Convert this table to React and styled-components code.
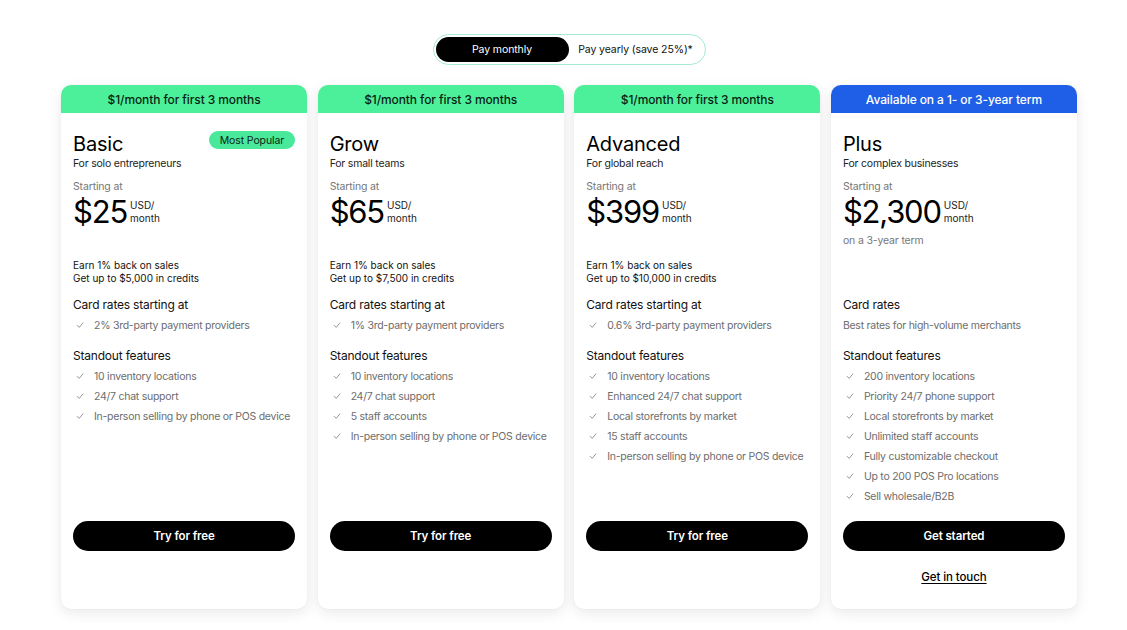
import React, { useState } from 'react'
import styled, { createGlobalStyle } from 'styled-components'

const GlobalStyle = createGlobalStyle`
  body {
    margin: 0;
    background: #ffffff;
    font-family: Inter, "Noto Sans", "Liberation Sans", sans-serif;
    color: #000;
  }
`;

const Page = styled.div`
  padding: 34px 50px 20px 61px;
  display: flex;
  flex-direction: column;
  align-items: center;
  gap: 20px;
`;

const Toggle = styled.div`
  display: grid;
  grid-template-columns: 133px 134px;
  padding: 2px;
  border: 1.5px solid #a4ecd0;
  border-radius: 999px;
`;

const ToggleOption = styled.button`
  border: 0;
  height: 25px;
  border-radius: 999px;
  font-family: inherit;
  font-size: 10.5px;
  letter-spacing: -0.1px;
  cursor: pointer;
  background: ${(p) => (p.$active ? '#000' : 'transparent')};
  color: ${(p) => (p.$active ? '#fff' : '#111')};
`;

const Grid = styled.div`
  width: 100%;
  display: grid;
  grid-template-columns: repeat(4, 1fr);
  gap: 10.5px;
`;

const Card = styled.div`
  display: flex;
  flex-direction: column;
  border-radius: 10px;
  background: #fff;
  box-shadow: 0 4px 14px rgba(0, 0, 0, 0.09), 0 0 2px rgba(0, 0, 0, 0.06);
  overflow: hidden;
`;

const Banner = styled.div`
  height: 28px;
  display: flex;
  align-items: center;
  justify-content: center;
  font-size: 12px;
  font-weight: 500;
  letter-spacing: -0.1px;
  background: ${(p) => (p.$blue ? '#1f5fe8' : '#4cf09a')};
  color: ${(p) => (p.$blue ? '#fff' : '#0a1f14')};
`;

const Body = styled.div`
  flex: 1;
  display: flex;
  flex-direction: column;
  padding: 19px 12px 24px;
`;

const TitleRow = styled.div`
  display: flex;
  justify-content: space-between;
  align-items: flex-start;
`;

const Title = styled.h2`
  margin: 0;
  font-size: 20px;
  line-height: 24px;
  font-weight: 400;
  letter-spacing: -0.2px;
`;

const Badge = styled.span`
  margin-top: -1px;
  background: #4ae89a;
  border-radius: 999px;
  padding: 0 11px;
  height: 18px;
  display: flex;
  align-items: center;
  font-size: 10.5px;
  letter-spacing: -0.1px;
  color: #0a1f14;
`;

const Sub = styled.div`
  margin-top: 1px;
  font-size: 10.5px;
  line-height: 14px;
  letter-spacing: -0.2px;
  color: #222;
`;

const PriceBlock = styled.div`
  margin-top: 9px;
  height: 79px;
`;

const Muted = styled.div`
  font-size: 10.5px;
  line-height: 14px;
  letter-spacing: -0.15px;
  color: #777;
`;

const PriceRow = styled.div`
  display: flex;
  align-items: flex-start;
  gap: 3px;
`;

const Amount = styled.span`
  font-size: 31px;
  line-height: 36px;
  letter-spacing: -1.2px;
`;

const Unit = styled.span`
  margin-top: 5px;
  font-size: 10px;
  line-height: 13px;
  color: #222;
`;

const Term = styled(Muted)`
  margin-top: 4px;
`;

const Perks = styled.div`
  height: 26px;
  font-size: 10px;
  line-height: 13px;
  color: #111;
`;

const SectionTitle = styled.div`
  margin-top: ${(p) => p.$mt || 12}px;
  font-size: 12px;
  line-height: 16px;
  letter-spacing: -0.2px;
  color: #111;
`;

const List = styled.ul`
  list-style: none;
  margin: 2px 0 0;
  padding: 0;
`;

const Item = styled.li`
  display: flex;
  align-items: center;
  height: 20px;
  white-space: nowrap;
  font-size: 10.5px;
  letter-spacing: -0.25px;
  color: #6d6d6d;
  padding-left: ${(p) => (p.$plain ? 0 : 3)}px;
`;

const Check = styled.svg`
  width: 8px;
  height: 8px;
  margin-right: 10px;
  flex-shrink: 0;
`;

const Footer = styled.div`
  margin-top: auto;
  padding-top: 15px;
  display: flex;
  flex-direction: column;
  align-items: center;
  gap: 19px;
  min-height: 64px;
`;

const Btn = styled.button`
  width: 100%;
  height: 30px;
  border: 0;
  border-radius: 999px;
  background: #000;
  color: #fff;
  font-family: inherit;
  font-size: 11.5px;
  font-weight: 600;
  letter-spacing: -0.1px;
  cursor: pointer;
`;

const Link = styled.a`
  font-size: 11.5px;
  font-weight: 500;
  letter-spacing: -0.1px;
  color: #000;
  text-decoration: underline;
  text-underline-offset: 2px;
`;

const CheckIcon = () => (
  <Check viewBox="0 0 10 10">
    <path d="M1.5 5.5 L4 8 L8.5 2.5" fill="none" stroke="#8a8a8a" strokeWidth="1.1" strokeLinecap="round" strokeLinejoin="round" />
  </Check>
)

const plans = [
  {
    banner: '$1/month for first 3 months',
    name: 'Basic',
    popular: true,
    sub: 'For solo entrepreneurs',
    price: '$25',
    perks: ['Earn 1% back on sales', 'Get up to $5,000 in credits'],
    rates: '2% 3rd-party payment providers',
    features: ['10 inventory locations', '24/7 chat support', 'In-person selling by phone or POS device'],
    cta: 'Try for free',
  },
  {
    banner: '$1/month for first 3 months',
    name: 'Grow',
    sub: 'For small teams',
    price: '$65',
    perks: ['Earn 1% back on sales', 'Get up to $7,500 in credits'],
    rates: '1% 3rd-party payment providers',
    features: ['10 inventory locations', '24/7 chat support', '5 staff accounts', 'In-person selling by phone or POS device'],
    cta: 'Try for free',
  },
  {
    banner: '$1/month for first 3 months',
    name: 'Advanced',
    sub: 'For global reach',
    price: '$399',
    perks: ['Earn 1% back on sales', 'Get up to $10,000 in credits'],
    rates: '0.6% 3rd-party payment providers',
    features: ['10 inventory locations', 'Enhanced 24/7 chat support', 'Local storefronts by market', '15 staff accounts', 'In-person selling by phone or POS device'],
    cta: 'Try for free',
  },
  {
    banner: 'Available on a 1- or 3-year term',
    blue: true,
    name: 'Plus',
    sub: 'For complex businesses',
    price: '$2,300',
    term: 'on a 3-year term',
    perks: [],
    ratesTitle: 'Card rates',
    rates: 'Best rates for high-volume merchants',
    plainRates: true,
    features: ['200 inventory locations', 'Priority 24/7 phone support', 'Local storefronts by market', 'Unlimited staff accounts', 'Fully customizable checkout', 'Up to 200 POS Pro locations', 'Sell wholesale/B2B'],
    cta: 'Get started',
    link: 'Get in touch',
  },
]

const PlanCard = ({ plan }) => (
  <Card>
    <Banner $blue={plan.blue}>{plan.banner}</Banner>
    <Body>
      <TitleRow>
        <Title>{plan.name}</Title>
        {plan.popular && <Badge>Most Popular</Badge>}
      </TitleRow>
      <Sub>{plan.sub}</Sub>
      <PriceBlock>
        <Muted>Starting at</Muted>
        <PriceRow>
          <Amount>{plan.price}</Amount>
          <Unit>USD/<br />month</Unit>
        </PriceRow>
        {plan.term && <Term>{plan.term}</Term>}
      </PriceBlock>
      <Perks>
        {plan.perks.map((p) => (
          <div key={p}>{p}</div>
        ))}
      </Perks>
      <SectionTitle>{plan.ratesTitle || 'Card rates starting at'}</SectionTitle>
      <List>
        <Item $plain={plan.plainRates}>
          {!plan.plainRates && <CheckIcon />}
          {plan.rates}
        </Item>
      </List>
      <SectionTitle $mt={13}>Standout features</SectionTitle>
      <List>
        {plan.features.map((f) => (
          <Item key={f}>
            <CheckIcon />
            {f}
          </Item>
        ))}
      </List>
      <Footer>
        <Btn>{plan.cta}</Btn>
        {plan.link && <Link href="#">{plan.link}</Link>}
      </Footer>
    </Body>
  </Card>
)

const App = () => {
  const [yearly, setYearly] = useState(false)
  return (
    <Page>
      <GlobalStyle />
      <Toggle>
        <ToggleOption $active={!yearly} onClick={() => setYearly(false)}>Pay monthly</ToggleOption>
        <ToggleOption $active={yearly} onClick={() => setYearly(true)}>Pay yearly (save 25%)*</ToggleOption>
      </Toggle>
      <Grid>
        {plans.map((p) => (
          <PlanCard key={p.name} plan={p} />
        ))}
      </Grid>
    </Page>
  )
}

export default App
